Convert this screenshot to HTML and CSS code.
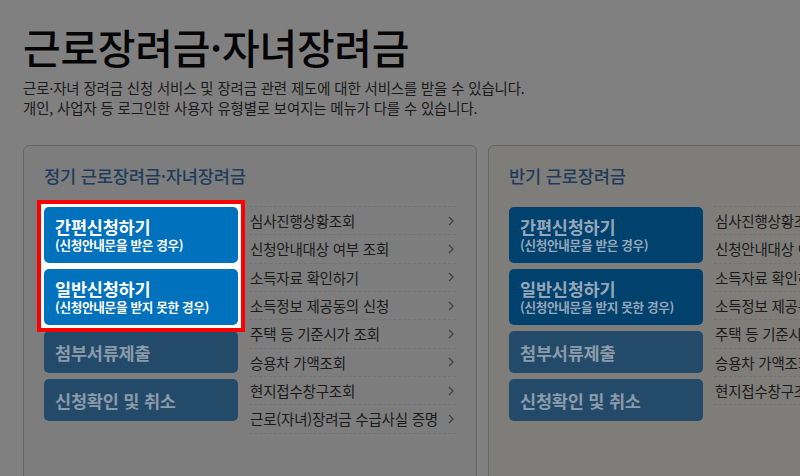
FILE: index.html
```html
<!DOCTYPE html>
<html lang="ko">
<head>
<meta charset="utf-8">
<title>근로장려금·자녀장려금</title>
<link rel="stylesheet" href="styles.css">
</head>
<body>
<div class="page">
  <h1 class="title">근로장려금·자녀장려금</h1>
  <p class="desc">근로·자녀 장려금 신청 서비스 및 장려금 관련 제도에 대한 서비스를 받을 수 있습니다.<br>개인, 사업자 등 로그인한 사용자 유형별로 보여지는 메뉴가 다를 수 있습니다.</p>
  <div class="cards">
    <section class="card card-left">
      <h2 class="card-title">정기 근로장려금·자녀장려금</h2>
      <div class="card-body">
        <div class="btns">
          <div class="btn-group highlight">
            <a class="btn btn-main btn-hl"><span class="btn-t">간편신청하기</span><span class="btn-s">(신청안내문을 받은 경우)</span></a>
            <a class="btn btn-main btn-hl"><span class="btn-t">일반신청하기</span><span class="btn-s">(신청안내문을 받지 못한 경우)</span></a>
          </div>
          <a class="btn btn-sub"><span class="btn-t">첨부서류제출</span></a>
          <a class="btn btn-sub"><span class="btn-t">신청확인 및 취소</span></a>
        </div>
        <ul class="links">
          <li><span>심사진행상황조회</span><svg class="chev" viewBox="0 0 6 10"><polyline points="1,1 5,5 1,9"/></svg></li>
          <li><span>신청안내대상 여부 조회</span><svg class="chev" viewBox="0 0 6 10"><polyline points="1,1 5,5 1,9"/></svg></li>
          <li><span>소득자료 확인하기</span><svg class="chev" viewBox="0 0 6 10"><polyline points="1,1 5,5 1,9"/></svg></li>
          <li><span>소득정보 제공동의 신청</span><svg class="chev" viewBox="0 0 6 10"><polyline points="1,1 5,5 1,9"/></svg></li>
          <li><span>주택 등 기준시가 조회</span><svg class="chev" viewBox="0 0 6 10"><polyline points="1,1 5,5 1,9"/></svg></li>
          <li><span>승용차 가액조회</span><svg class="chev" viewBox="0 0 6 10"><polyline points="1,1 5,5 1,9"/></svg></li>
          <li><span>현지접수창구조회</span><svg class="chev" viewBox="0 0 6 10"><polyline points="1,1 5,5 1,9"/></svg></li>
          <li><span>근로(자녀)장려금 수급사실 증명</span><svg class="chev" viewBox="0 0 6 10"><polyline points="1,1 5,5 1,9"/></svg></li>
        </ul>
      </div>
    </section>
    <section class="card card-right">
      <h2 class="card-title">반기 근로장려금</h2>
      <div class="card-body">
        <div class="btns">
          <div class="btn-group">
            <a class="btn btn-main btn-dim"><span class="btn-t">간편신청하기</span><span class="btn-s">(신청안내문을 받은 경우)</span></a>
            <a class="btn btn-main btn-dim"><span class="btn-t">일반신청하기</span><span class="btn-s">(신청안내문을 받지 못한 경우)</span></a>
          </div>
          <a class="btn btn-sub"><span class="btn-t">첨부서류제출</span></a>
          <a class="btn btn-sub"><span class="btn-t">신청확인 및 취소</span></a>
        </div>
        <ul class="links">
          <li><span>심사진행상황조회</span><svg class="chev" viewBox="0 0 6 10"><polyline points="1,1 5,5 1,9"/></svg></li>
          <li><span>신청안내대상 여부 조회</span><svg class="chev" viewBox="0 0 6 10"><polyline points="1,1 5,5 1,9"/></svg></li>
          <li><span>소득자료 확인하기</span><svg class="chev" viewBox="0 0 6 10"><polyline points="1,1 5,5 1,9"/></svg></li>
          <li><span>소득정보 제공동의 신청</span><svg class="chev" viewBox="0 0 6 10"><polyline points="1,1 5,5 1,9"/></svg></li>
          <li><span>주택 등 기준시가 조회</span><svg class="chev" viewBox="0 0 6 10"><polyline points="1,1 5,5 1,9"/></svg></li>
          <li><span>승용차 가액조회</span><svg class="chev" viewBox="0 0 6 10"><polyline points="1,1 5,5 1,9"/></svg></li>
          <li><span>현지접수창구조회</span><svg class="chev" viewBox="0 0 6 10"><polyline points="1,1 5,5 1,9"/></svg></li>
        </ul>
      </div>
    </section>
  </div>
</div>
</body>
</html>
```

FILE: styles.css
```css
html, body {
  margin: 0;
  padding: 0;
  background: #808080;
  overflow: hidden;
}
body {
  width: 800px;
  height: 476px;
  font-family: "Noto Sans CJK KR", "Noto Sans", sans-serif;
  color: #111;
}
.page {
  padding: 21px 0 0 23px;
}
.title {
  margin: 0;
  font-size: 41px;
  font-weight: 500;
  line-height: 50px;
  color: #050505;
  letter-spacing: -0.3px;
}
.desc {
  margin: 7px 0 0 0;
  font-size: 14.4px;
  line-height: 20px;
  color: #1a1a1a;
  letter-spacing: -0.1px;
}
.cards {
  display: flex;
  gap: 11px;
  margin-top: 27px;
  width: 1000px;
}
.card {
  flex: 0 0 auto;
  width: 412px;
  height: 340px;
  border: 1px solid #666;
  border-radius: 6px;
  padding: 0 20px;
}
.card-left { background: #7d7d7d; }
.card-right { background: #7f7d79; }
.card-title {
  margin: 0;
  padding-top: 17px;
  height: 44px;
  font-size: 17.6px;
  font-weight: 500;
  line-height: 26px;
  color: #1d3c5c;
  letter-spacing: -0.2px;
  box-sizing: border-box;
}
.card-body {
  display: flex;
  margin-top: 17px;
  gap: 11px;
}
.btns {
  width: 195px;
  display: flex;
  flex-direction: column;
  gap: 6px;
}
.btn-group {
  display: flex;
  flex-direction: column;
  gap: 6px;
}
.highlight {
  position: relative;
  z-index: 1;
  background: #fff;
  box-shadow: 0 0 0 3px #fff, 0 0 0 7px #f00;
}
.btn {
  display: flex;
  flex-direction: column;
  justify-content: center;
  box-sizing: border-box;
  border-radius: 5px;
  padding: 0 11px;
  font-weight: 700;
}
.btn-main { height: 56px; padding-bottom: 2px; }
.btn-sub { height: 42px; background: #244a69; color: #8a9bab; }
.btn-hl { background: #0071bc; color: #fff; }
.btn-dim { background: #00416e; color: #96a7b9; }
.btn-t {
  font-size: 17.5px;
  line-height: 21px;
  letter-spacing: -0.2px;
}
.btn-s {
  font-size: 12.6px;
  line-height: 15px;
  letter-spacing: -0.3px;
}
.links {
  list-style: none;
  margin: -1px 0 0 0;
  padding: 0;
  width: 208px;
  border-top: 1px dashed #727272;
}
.links li {
  display: flex;
  align-items: center;
  justify-content: space-between;
  height: 27.33px;
  border-bottom: 1px dashed #727272;
  font-size: 14.5px;
  color: #1a1a1a;
  letter-spacing: -0.2px;
  padding-left: 1px;
  white-space: nowrap;
}
.chev {
  flex: 0 0 auto;
  width: 6px;
  height: 10px;
  margin-right: 2px;
  fill: none;
  stroke: #3c3c3c;
  stroke-width: 1.1;
}
```
